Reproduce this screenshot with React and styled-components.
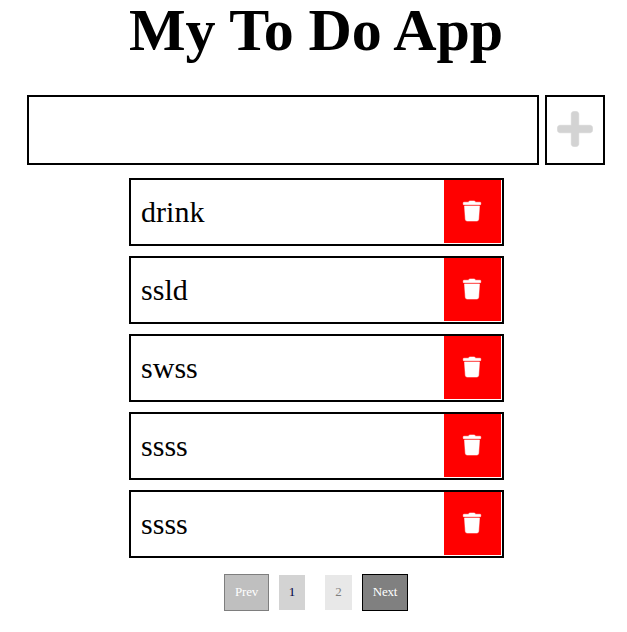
import React from "react";
import styled, { createGlobalStyle } from "styled-components";
import { FaPlus, FaTrash } from "react-icons/fa";

const GlobalStyle = createGlobalStyle`
  * { box-sizing: border-box; }
  body {
    margin: 0;
    background: #fff;
    color: #000;
    font-family: "Liberation Serif", "Times New Roman", serif;
  }
`;

const Page = styled.main`
  display: flex;
  flex-direction: column;
  align-items: center;
  width: 627px;
  height: 632px;
  padding-left: 5px;
`;

const Title = styled.h1`
  margin: 0;
  height: 95px;
  font-size: 60px;
  line-height: 60px;
  letter-spacing: -0.1px;
  white-space: nowrap;
`;

const Form = styled.form`
  display: flex;
  gap: 6px;
  width: 578px;
  height: 70px;
`;

const TaskInput = styled.input`
  width: 512px;
  border: 2px solid #000;
  padding: 0 10px;
  font: 30px "Liberation Serif", serif;
  outline: none;
`;

const AddButton = styled.button`
  display: flex;
  align-items: center;
  justify-content: center;
  width: 60px;
  padding: 0 0 2px;
  border: 2px solid #000;
  background: #fff;
  color: lightgray;
  font-size: 40px;

  path {
    stroke: lightgray;
    stroke-width: 8px;
  }
`;

const List = styled.ul`
  display: flex;
  flex-direction: column;
  gap: 10px;
  width: 375px;
  margin: 13px 0 16px;
  padding: 0;
  list-style: none;
`;

const Item = styled.li`
  display: flex;
  justify-content: space-between;
  height: 68px;
  padding: 0 1px 1px 10.6px;
  border: 2px solid #000;
  font-size: 30px;
  line-height: 64px;
`;

const DeleteButton = styled.button`
  display: flex;
  align-items: center;
  justify-content: center;
  width: 57px;
  padding: 0 0 2px;
  border: 0;
  background: red;
  color: #fff;
  font-size: 20px;

  svg {
    overflow: visible;
  }

  path {
    stroke: #fff;
    stroke-width: 14px;
  }
`;

const Pagination = styled.nav`
  display: flex;
  align-items: center;
  height: 37px;
  gap: 10px;
`;

const StepButton = styled.button`
  width: ${(p) => (p.$wide ? 46 : 45)}px;
  height: 37px;
  padding: 0 0 2px;
  border: 1px solid #000;
  background: gray;
  color: #fff;
  font: 13px "Liberation Serif", serif;
  letter-spacing: -0.2px;
  opacity: ${(p) => (p.disabled ? 0.5 : 1)};
`;

const Pages = styled.div`
  display: flex;
  gap: 20px;
`;

const PageButton = styled.button`
  width: ${(p) => (p.$current ? 26 : 27)}px;
  height: 35px;
  padding: 0 0 2px;
  border: 0;
  background: lightgray;
  color: ${(p) => (p.$current ? "#000040" : "#000")};
  font: 13px "Liberation Serif", serif;
  opacity: ${(p) => (p.$current ? 1 : 0.5)};
`;

const tasks = ["drink", "ssld", "swss", "ssss", "ssss"];

export default function App() {
  return (
    <Page>
      <GlobalStyle />
      <Title>My To Do App</Title>
      <Form onSubmit={(e) => e.preventDefault()}>
        <TaskInput aria-label="New task" />
        <AddButton aria-label="Add task">
          <FaPlus />
        </AddButton>
      </Form>
      <List>
        {tasks.map((task, i) => (
          <Item key={i}>
            <span>{task}</span>
            <DeleteButton type="button" aria-label={`Delete ${task}`}>
              <FaTrash />
            </DeleteButton>
          </Item>
        ))}
      </List>
      <Pagination>
        <StepButton disabled>Prev</StepButton>
        <Pages>
          <PageButton $current>1</PageButton>
          <PageButton>2</PageButton>
        </Pages>
        <StepButton $wide>Next</StepButton>
      </Pagination>
    </Page>
  );
}
